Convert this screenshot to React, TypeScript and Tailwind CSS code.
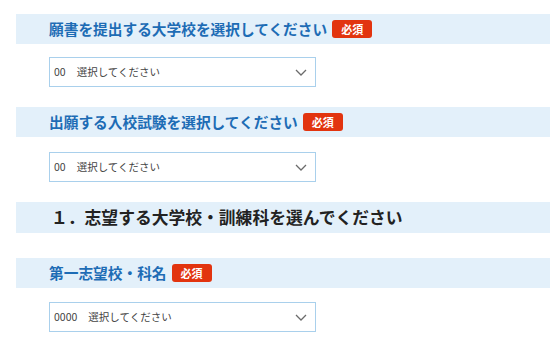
const font = { fontFamily: '"Noto Sans CJK JP", "Noto Sans", sans-serif' }

const Badge = () => (
    <span className="ml-[5px] inline-flex h-[18px] w-[40px] items-center justify-center rounded-[3px] bg-[#e2340f] text-[11px] font-bold leading-none text-white">
        必須
    </span>
)

const Heading = ({ label, required }: { label: string; required?: boolean }) => (
    <div className="flex h-[30px] items-center bg-[#e3f0fa] pl-[33px]">
        <span className="text-[14.7px] font-bold leading-none text-[#1d6cb5]">{label}</span>
        {required && <Badge />}
    </div>
)

const SelectBox = ({ code }: { code: string }) => (
    <div className="ml-[33px] flex h-[30px] w-[267px] items-center border-[1.5px] border-[#a9d0ec] bg-white pl-[4px] pr-[8px]">
        <span className="text-[10.5px] text-[#444]">{code}</span>
        <span className="ml-[11px] text-[10.5px] text-[#444]">選択してください</span>
        <svg className="ml-auto" width="12" height="7" viewBox="0 0 12 7" fill="none">
            <path d="M1 1 L6 6 L11 1" stroke="#6b6b6b" strokeWidth="1.3" />
        </svg>
    </div>
)

const App = () => {
    return (
        <div className="h-[351px] w-[550px] overflow-hidden bg-white pl-4" style={font}>
            <div className="pt-[14px]">
                <Heading label="願書を提出する大学校を選択してください" required />
            </div>
            <div className="mt-[13px]">
                <SelectBox code="00" />
            </div>
            <div className="mt-[20px]">
                <Heading label="出願する入校試験を選択してください" required />
            </div>
            <div className="mt-[15px]">
                <SelectBox code="00" />
            </div>
            <div className="mt-[20px] flex h-[31px] items-center bg-[#e3f0fa] pl-[35px]">
                <span className="text-[16.8px] font-bold leading-none text-[#222]">１．志望する大学校・訓練科を選んでください</span>
            </div>
            <div className="mt-[25px]">
                <Heading label="第一志望校・科名" required />
            </div>
            <div className="mt-[14px]">
                <SelectBox code="0000" />
            </div>
        </div>
    )
}

export default App
